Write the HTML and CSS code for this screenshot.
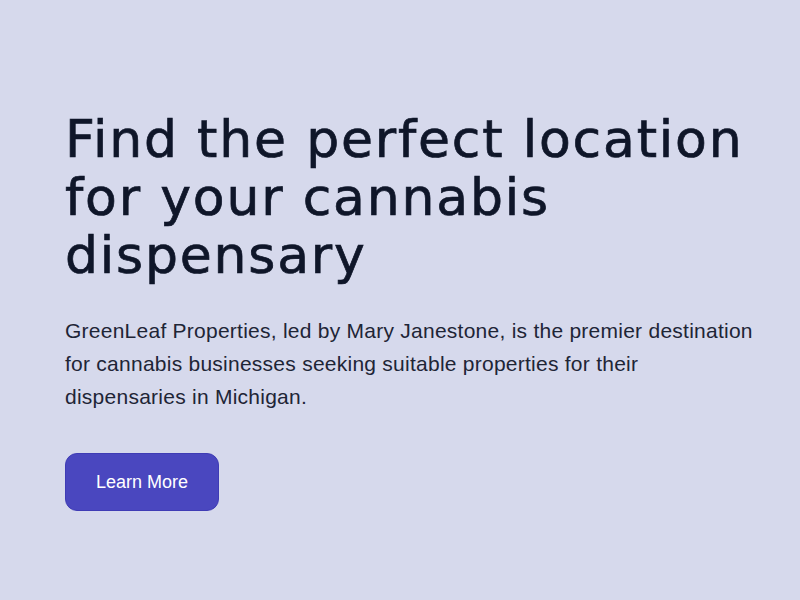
FILE: index.html
```html
<!DOCTYPE html>
<html lang="en">
<head>
<meta charset="utf-8">
<title>GreenLeaf Properties</title>
<link rel="stylesheet" href="styles.css">
</head>
<body>
<main class="hero">
  <h1 class="hero-title">Find the perfect location for your cannabis dispensary</h1>
  <p class="hero-text">GreenLeaf Properties, led by Mary Janestone, is the premier destination for cannabis businesses seeking suitable properties for their dispensaries in Michigan.</p>
  <a class="hero-button" href="#">Learn More</a>
</main>
</body>
</html>
```
FILE: styles.css
```css
html, body {
  margin: 0;
  padding: 0;
}
body {
  background: #d6d9ec;
  width: 800px;
  height: 600px;
  overflow: hidden;
}
.hero {
  display: flex;
  flex-direction: column;
  align-items: flex-start;
  padding: 110px 0 0 65px;
}
.hero-title {
  margin: 0;
  max-width: 700px;
  font-family: "DejaVu Sans", sans-serif;
  font-weight: 500;
  font-size: 52px;
  line-height: 58px;
  letter-spacing: 1.8px;
  color: #0f1629;
  -webkit-text-stroke: 0.7px #0f1629;
}
.hero-text {
  margin: 30px 0 0 0;
  max-width: 692px;
  font-family: "Liberation Sans", Arial, sans-serif;
  font-size: 21px;
  line-height: 33px;
  letter-spacing: 0.25px;
  color: #1e2536;
}
.hero-button {
  margin-top: 40px;
  box-sizing: border-box;
  width: 154px;
  height: 58px;
  display: flex;
  align-items: center;
  justify-content: center;
  background: #4a47bf;
  border: 1px solid #3f3cb5;
  border-radius: 12px;
  color: #ffffff;
  text-decoration: none;
  font-family: "Liberation Sans", Arial, sans-serif;
  font-size: 18px;
}
```
